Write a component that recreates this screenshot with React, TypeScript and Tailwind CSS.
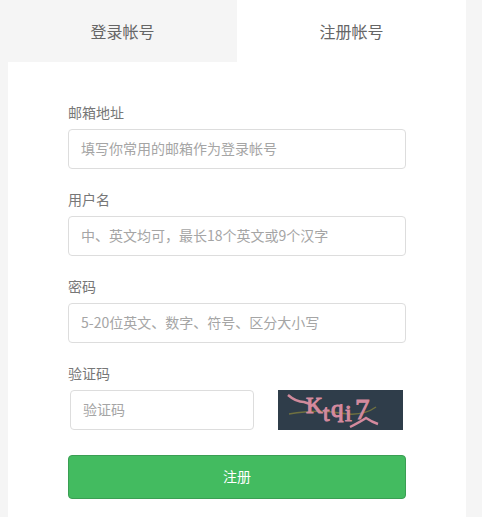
import React from 'react';

const fields = [
  { label: '邮箱地址', placeholder: '填写你常用的邮箱作为登录帐号' },
  { label: '用户名', placeholder: '中、英文均可，最长18个英文或9个汉字' },
  { label: '密码', placeholder: '5-20位英文、数字、符号、区分大小写' },
];

function Captcha() {
  return (
    <svg viewBox="0 0 125 40" className="w-[125px] h-10 block">
      <rect width="125" height="40" fill="#2f3d4a" />
      {/* noise line */}
      <path d="M11 24 Q40 19 62 23 T98 17" fill="none" stroke="#6f7040" strokeWidth="1.5" />
      <path d="M10 5 Q18 12 26 12 L32 14" fill="none" stroke="#d08a9c" strokeWidth="2.5" />
      <g fill="#d48a9e" stroke="#d48a9e" strokeWidth="1.1" fontFamily="'Liberation Serif', serif">
        <text x="28" y="23" fontSize="23">K</text>
        <text x="45" y="31" fontSize="23">t</text>
        <text x="53" y="27" fontSize="25">q</text>
        <text x="67" y="31" fontSize="24">i</text>
        <text x="77" y="29" fontSize="29">7</text>
      </g>
      <path d="M72 37 Q82 32 88 28 Q94 32 100 34" fill="none" stroke="#d48a9e" strokeWidth="2.5" />
    </svg>
  );
}

export default function App() {
  return (
    <div className="h-[517px] overflow-hidden bg-[#f5f5f5] font-['Noto_Sans_CJK_SC',sans-serif]">
      <div className="ml-2 w-[458px] h-[517px] bg-white">
        {/* Tabs */}
        <div className="flex h-[62px] text-base text-[#666]">
          <div className="w-[229px] bg-[#f5f5f5] flex items-center justify-center pb-px">登录帐号</div>
          <div className="w-[229px] bg-white flex items-center justify-center pb-px">注册帐号</div>
        </div>

        {/* Form */}
        <form className="px-[60px] pt-[41px]">
          {fields.map(f => (
            <div key={f.label} className="mb-[21px]">
              <label className="block h-5 leading-[18px] mb-1.5 text-sm text-[#777]">{f.label}</label>
              <input
                placeholder={f.placeholder}
                className="block w-full h-10 pl-3 pr-3 pb-0.5 rounded border border-[#ddd] bg-white text-sm outline-none placeholder:text-[#a5a5a5]"
              />
            </div>
          ))}

          <label className="block h-5 leading-[18px] mb-1.5 text-sm text-[#777]">验证码</label>
          <div className="flex items-start pl-0.5">
            <input
              placeholder="验证码"
              className="block w-[184px] h-10 pl-3 pr-3 pb-0.5 rounded border border-[#ddd] bg-white text-sm outline-none placeholder:text-[#a5a5a5]"
            />
            <div className="ml-6">
              <Captcha />
            </div>
          </div>

          <button
            type="button"
            className="block w-full h-11 mt-[25px] pb-0.5 rounded bg-[#43bb60] border border-[#3a9e53] text-sm text-white"
          >
            注册
          </button>
        </form>
      </div>
    </div>
  );
}
